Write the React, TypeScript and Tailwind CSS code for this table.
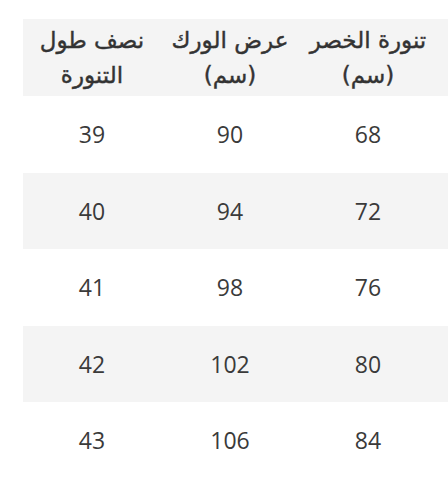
const headers = [
  ["تنورة الخصر", "(سم)"],
  ["عرض الورك", "(سم)"],
  ["نصف طول", "التنورة"],
];

const rows = [
  ["68", "90", "39"],
  ["72", "94", "40"],
  ["76", "98", "41"],
  ["80", "102", "42"],
  ["84", "106", "43"],
];

const App = () => {
  return (
    <div className="h-[500px] w-[448px] overflow-hidden bg-white pt-[19px]">
      <div className="ml-[23px]" dir="rtl">
        <div className="grid h-[77px] grid-cols-[11px_138px_138px_138px] items-center bg-[#f4f4f4] font-['DejaVu_Sans',sans-serif] text-[23px] font-normal leading-[35px] text-[#333333] [-webkit-text-stroke:0.4px_#333333]">
          <div />
          {headers.map((h, i) => (
            <div key={i} className="text-center">
              <div>{h[0]}</div>
              <div>{h[1]}</div>
            </div>
          ))}
        </div>
        {rows.map((r, i) => (
          <div
            key={i}
            className={`grid h-[76.6px] grid-cols-[11px_138px_138px_138px] items-center font-['Open_Sans',sans-serif] text-[23px] text-[#3a3a3a] ${
              i % 2 === 1 ? "bg-[#f4f4f4]" : "bg-white"
            }`}>
            <div />
            {r.map((v, j) => (
              <div key={j} className="text-center">
                {v}
              </div>
            ))}
          </div>
        ))}
      </div>
    </div>
  );
};

export default App;
